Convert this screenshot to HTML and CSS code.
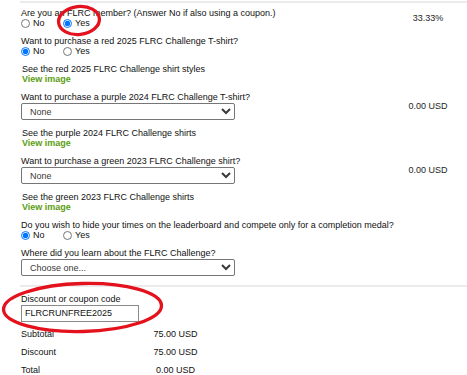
FILE: index.html
```html
<!DOCTYPE html>
<html>
<head>
<meta charset="utf-8">
<link rel="stylesheet" href="styles.css">
</head>
<body>
<div class="page">
  <section class="form">
    <div class="row">
      <div class="field">
        <div class="q">Are you an FLRC member? (Answer No if also using a coupon.)</div>
        <div class="radios">
          <label class="opt"><input type="radio" name="member">No</label>
          <label class="opt"><input type="radio" name="member" checked>Yes</label>
        </div>
      </div>
      <div class="price">33.33%</div>
    </div>
    <div class="row">
      <div class="field">
        <div class="q">Want to purchase a red 2025 FLRC Challenge T-shirt?</div>
        <div class="radios">
          <label class="opt"><input type="radio" name="red" checked>No</label>
          <label class="opt"><input type="radio" name="red">Yes</label>
        </div>
      </div>
      <div class="price"></div>
    </div>
    <div class="row">
      <div class="field">
        <div class="note">See the red 2025 FLRC Challenge shirt styles</div>
        <a class="view" href="#">View image</a>
      </div>
      <div class="price"></div>
    </div>
    <div class="row">
      <div class="field">
        <div class="q">Want to purchase a purple 2024 FLRC Challenge T-shirt?</div>
        <select class="sel"><option>None</option></select>
      </div>
      <div class="price">0.00 USD</div>
    </div>
    <div class="row">
      <div class="field">
        <div class="note">See the purple 2024 FLRC Challenge shirts</div>
        <a class="view" href="#">View image</a>
      </div>
      <div class="price"></div>
    </div>
    <div class="row">
      <div class="field">
        <div class="q">Want to purchase a green 2023 FLRC Challenge shirt?</div>
        <select class="sel"><option>None</option></select>
      </div>
      <div class="price">0.00 USD</div>
    </div>
    <div class="row">
      <div class="field">
        <div class="note">See the green 2023 FLRC Challenge shirts</div>
        <a class="view" href="#">View image</a>
      </div>
      <div class="price"></div>
    </div>
    <div class="row">
      <div class="field">
        <div class="q">Do you wish to hide your times on the leaderboard and compete only for a completion medal?</div>
        <div class="radios">
          <label class="opt"><input type="radio" name="hide" checked>No</label>
          <label class="opt"><input type="radio" name="hide">Yes</label>
        </div>
      </div>
      <div class="price"></div>
    </div>
    <div class="row">
      <div class="field">
        <div class="q">Where did you learn about the FLRC Challenge?</div>
        <select class="sel"><option>Choose one...</option></select>
      </div>
      <div class="price"></div>
    </div>
  </section>

  <section class="coupon">
    <div class="q">Discount or coupon code</div>
    <input class="code" type="text" value="FLRCRUNFREE2025">
    <div class="totals">
      <div class="tl">Subtotal</div><div class="tv">75.00 USD</div>
      <div class="tl">Discount</div><div class="tv">75.00 USD</div>
      <div class="tl">Total</div><div class="tv">0.00 USD</div>
    </div>
  </section>

  <svg class="marks" width="467" height="375" viewBox="0 0 467 375">
    <ellipse cx="79" cy="20.5" rx="20.5" ry="14" transform="rotate(-6 79 20.5)" fill="none" stroke="#e3121c" stroke-width="3.3"/>
    <ellipse cx="82.5" cy="307.5" rx="79" ry="24" transform="rotate(-1.5 82.5 307.5)" fill="none" stroke="#e3121c" stroke-width="3.3"/>
  </svg>
</div>
</body>
</html>
```

FILE: styles.css
```css
* { box-sizing: border-box; }
html, body { margin: 0; padding: 0; background: #fff; }
body {
  font-family: "Liberation Sans", Arial, sans-serif;
  font-size: 9px;
  line-height: 10px;
  color: #111;
}
.page {
  position: relative;
  width: 467px;
  height: 375px;
  overflow: hidden;
}
.form {
  margin: 1px 0 0 20px;
  border-top: 2px solid #ebebeb;
  border-bottom: 2px solid #ebebeb;
  padding: 5.4px 0 9px 1px;
  display: flex;
  flex-direction: column;
  gap: 8px;
}
.row {
  display: grid;
  grid-template-columns: 1fr 78px;
  align-items: center;
}
.field { display: flex; flex-direction: column; align-items: flex-start; }
.q, .note { white-space: nowrap; }
.note { padding-left: 1px; }
.price { text-align: center; color: #1e1e1e; }
.radios { display: flex; height: 10px; align-items: center; }
.opt { display: inline-flex; align-items: center; width: 42px; }
.opt input {
  width: 9px;
  height: 9px;
  margin: 0 3px 0 0;
}
.view {
  color: #5b9e12;
  font-weight: bold;
  text-decoration: none;
  padding-left: 1px;
}
.sel {
  margin-top: 1px;
  width: 214px;
  height: 17px;
  font-family: "Liberation Sans", Arial, sans-serif;
  font-size: 9px;
  color: #3a3a3a;
  padding: 0 0 0 4px;
  border: 1px solid #767676;
  border-radius: 2px;
  background: #fff;
}
.coupon {
  margin-left: 20px;
  padding: 6.4px 0 0 1px;
}
.code {
  display: block;
  margin-top: 1px;
  width: 118px;
  height: 17px;
  padding: 0 0 0 3px;
  border: 1px solid #8a8a8a;
  border-radius: 0;
  font-family: "Liberation Sans", Arial, sans-serif;
  font-size: 9px;
  color: #111;
}
.totals {
  margin-top: 3px;
  display: grid;
  grid-template-columns: 114.5px 80px;
  grid-auto-rows: 18px;
  align-items: center;
}
.tv { text-align: center; }
.marks {
  position: absolute;
  top: 0;
  left: 0;
  pointer-events: none;
}
```
